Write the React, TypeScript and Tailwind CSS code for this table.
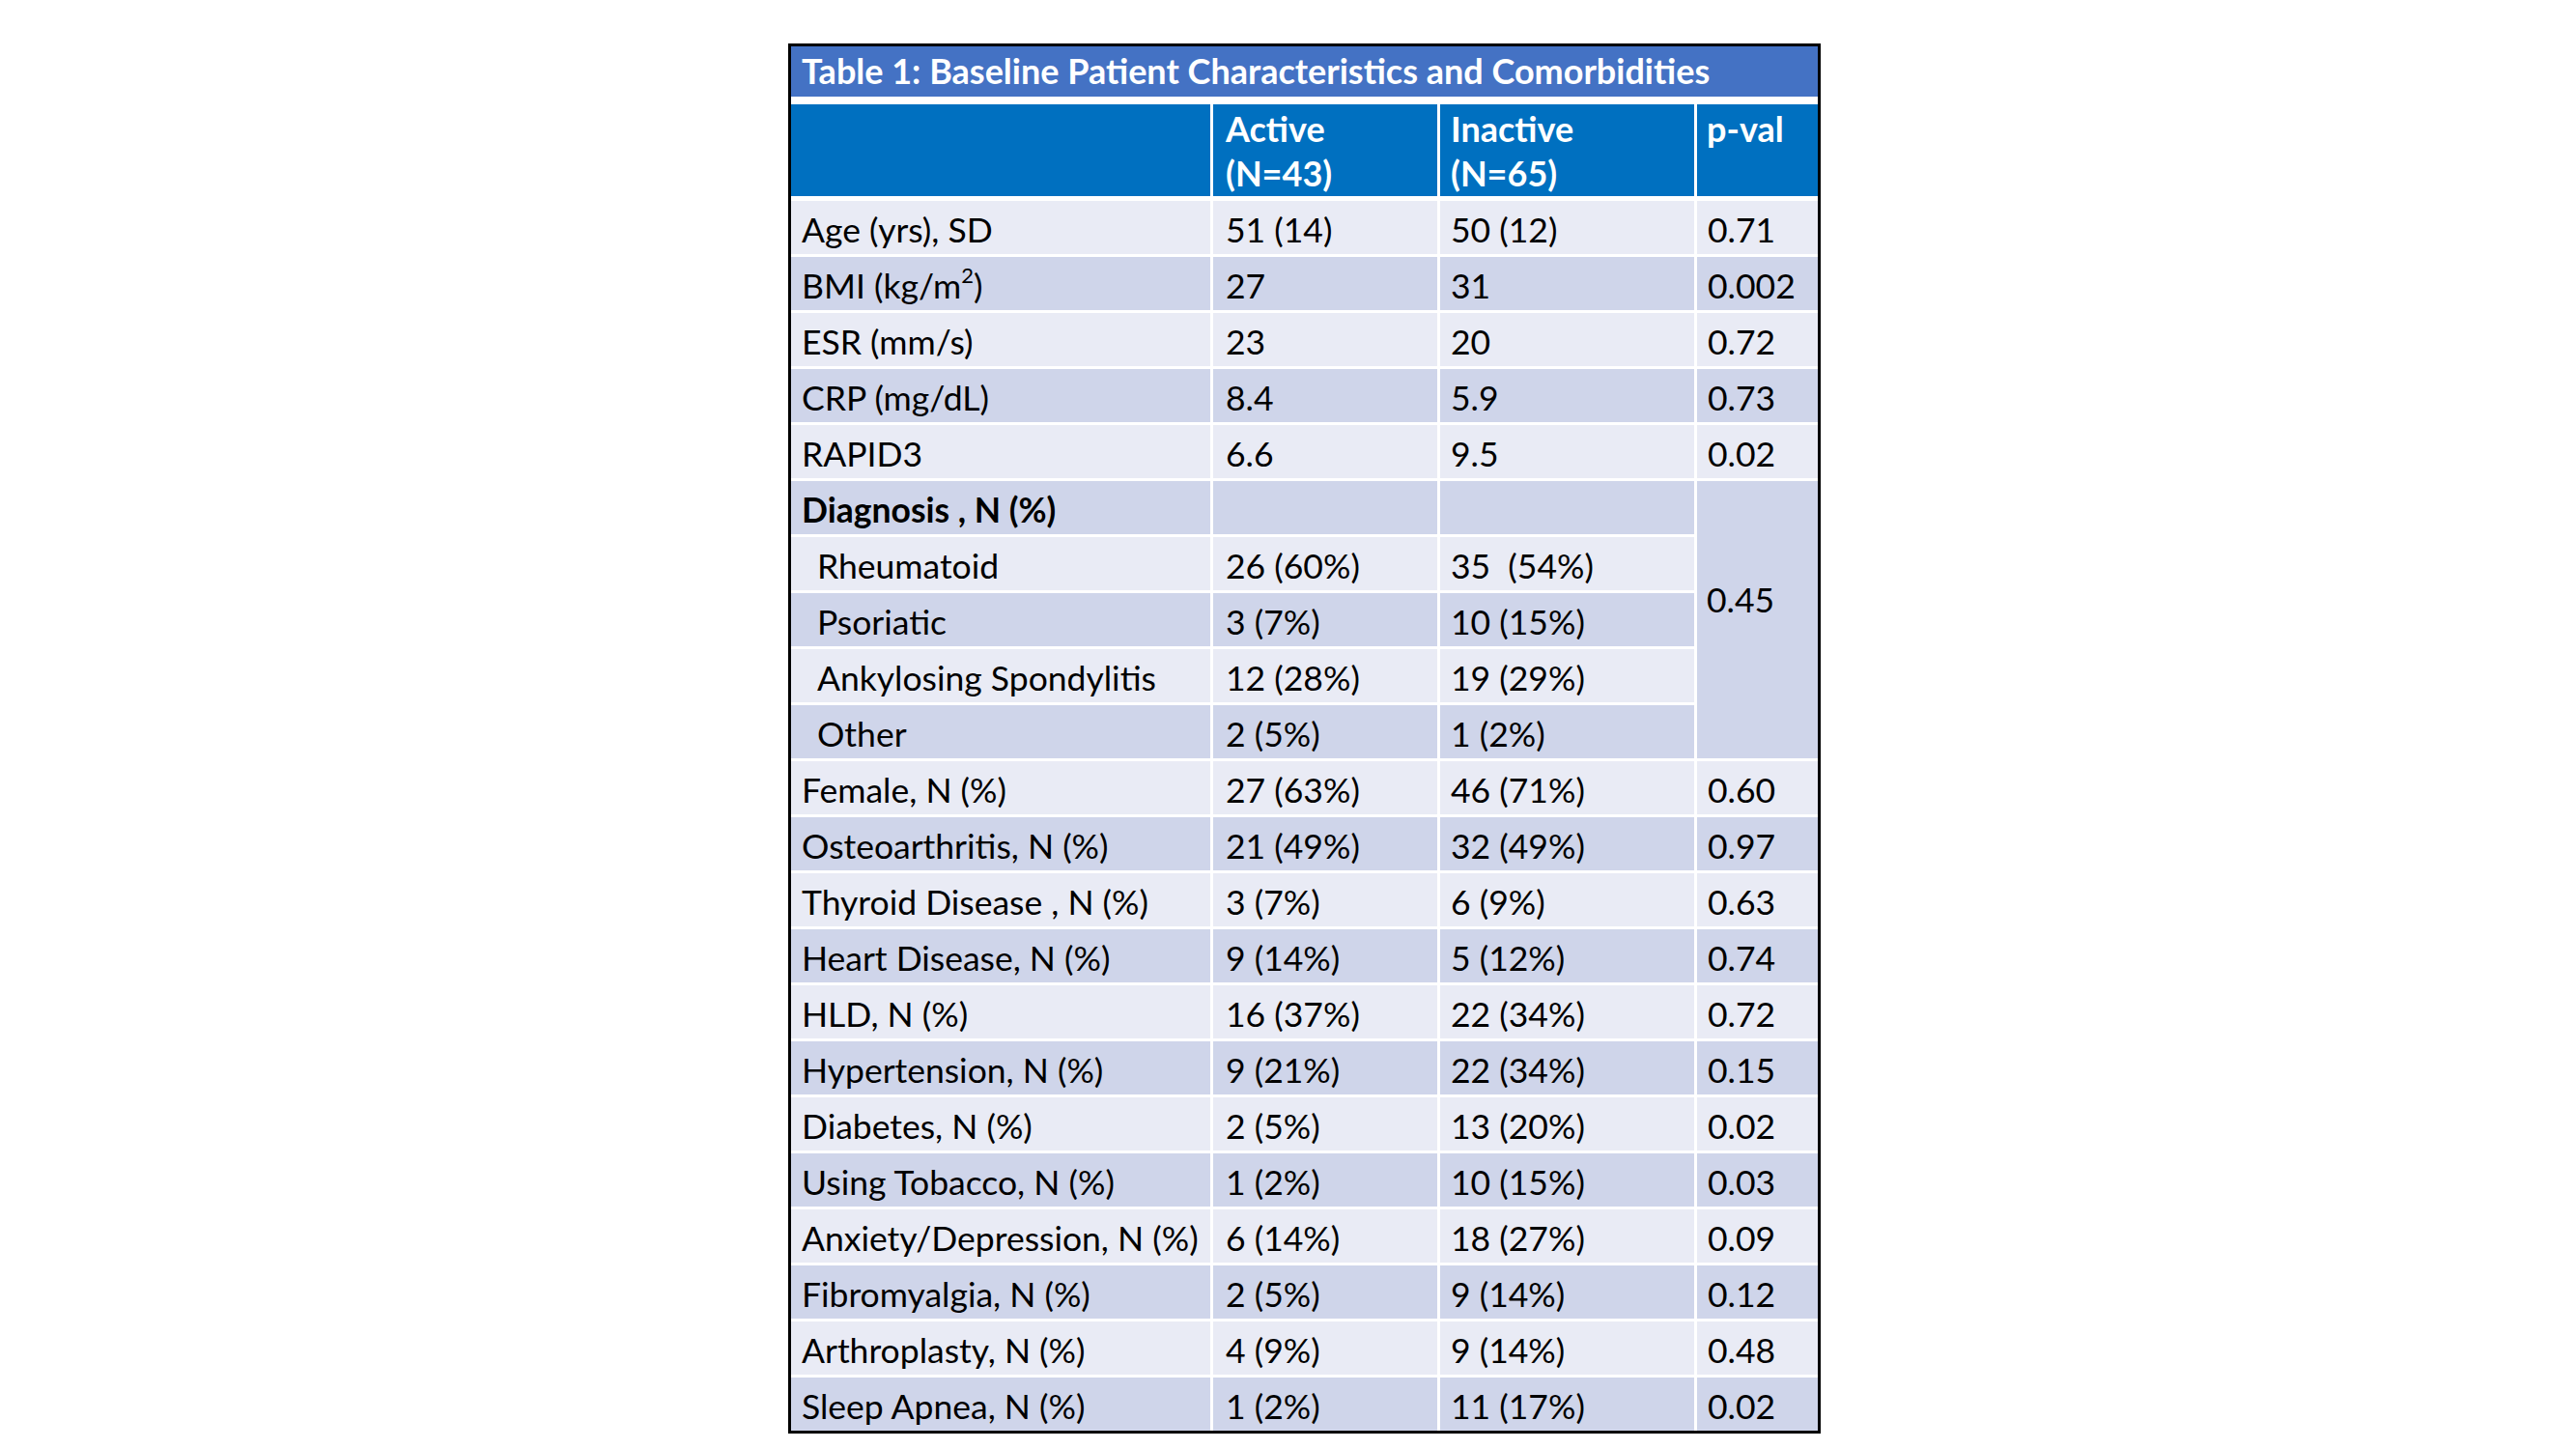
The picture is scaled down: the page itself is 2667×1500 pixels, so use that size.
import type { ReactNode } from "react"

type Row = {
  label: ReactNode
  active: string
  inactive: string
  p?: string
  sub?: boolean
  bold?: boolean
}

const rows: Row[] = [
  { label: "Age (yrs), SD", active: "51 (14)", inactive: "50 (12)", p: "0.71" },
  { label: <>BMI (kg/m<sup className="text-[0.62em]">2</sup>)</>, active: "27", inactive: "31", p: "0.002" },
  { label: "ESR (mm/s)", active: "23", inactive: "20", p: "0.72" },
  { label: "CRP (mg/dL)", active: "8.4", inactive: "5.9", p: "0.73" },
  { label: "RAPID3", active: "6.6", inactive: "9.5", p: "0.02" },
  { label: "Diagnosis , N (%)", active: "", inactive: "", bold: true },
  { label: "Rheumatoid", active: "26 (60%)", inactive: "35  (54%)", sub: true },
  { label: "Psoriatic", active: "3 (7%)", inactive: "10 (15%)", sub: true },
  { label: "Ankylosing Spondylitis", active: "12 (28%)", inactive: "19 (29%)", sub: true },
  { label: "Other", active: "2 (5%)", inactive: "1 (2%)", sub: true },
  { label: "Female, N (%)", active: "27 (63%)", inactive: "46 (71%)", p: "0.60" },
  { label: "Osteoarthritis, N (%)", active: "21 (49%)", inactive: "32 (49%)", p: "0.97" },
  { label: "Thyroid Disease , N (%)", active: "3 (7%)", inactive: "6 (9%)", p: "0.63" },
  { label: "Heart Disease, N (%)", active: "9 (14%)", inactive: "5 (12%)", p: "0.74" },
  { label: "HLD, N (%)", active: "16 (37%)", inactive: "22 (34%)", p: "0.72" },
  { label: "Hypertension, N (%)", active: "9 (21%)", inactive: "22 (34%)", p: "0.15" },
  { label: "Diabetes, N (%)", active: "2 (5%)", inactive: "13 (20%)", p: "0.02" },
  { label: "Using Tobacco, N (%)", active: "1 (2%)", inactive: "10 (15%)", p: "0.03" },
  { label: "Anxiety/Depression, N (%)", active: "6 (14%)", inactive: "18 (27%)", p: "0.09" },
  { label: "Fibromyalgia, N (%)", active: "2 (5%)", inactive: "9 (14%)", p: "0.12" },
  { label: "Arthroplasty, N (%)", active: "4 (9%)", inactive: "9 (14%)", p: "0.48" },
  { label: "Sleep Apnea, N (%)", active: "1 (2%)", inactive: "11 (17%)", p: "0.02" },
]

function Cell({ dark, className = "", children }: { dark: boolean; className?: string; children?: ReactNode }) {
  return (
    <div className={`flex h-[55px] items-center whitespace-pre pl-[11px] pt-[5px] ${dark ? "bg-[#cfd5ea]" : "bg-[#e9ebf5]"} ${className}`}>
      {children}
    </div>
  )
}

export default function App() {
  return (
    <div className="min-h-[1500px] w-full bg-white pl-[816px] pt-[45px] font-['Lato','Liberation_Sans',sans-serif] text-[35.5px] leading-[1.2] text-black">
      <div className="w-[1069px] border-[3px] border-black bg-white">
        <div className="flex h-[52px] items-center bg-[#4472c4] pl-[11px] text-[36px] font-bold text-white">
          Table 1: Baseline Patient Characteristics and Comorbidities
        </div>

        <div className="mb-[5px] mt-[8px] grid grid-cols-[434px_232px_263px_125px] gap-x-[3px] text-[36px] font-bold text-white">
          <div className="h-[95px] bg-[#0070c0]" />
          <div className="h-[95px] bg-[#0070c0] pl-[13px] pt-[2px] leading-[46px]">Active<br />(N=43)</div>
          <div className="h-[95px] bg-[#0070c0] pl-[11px] pt-[2px] leading-[46px]">Inactive<br />(N=65)</div>
          <div className="h-[95px] bg-[#0070c0] pl-[10px] pt-[2px] leading-[46px]">p-val</div>
        </div>

        <div className="grid grid-cols-[434px_232px_263px_125px] gap-[3px]">
          {rows.map((row, i) => {
            const dark = i % 2 === 1
            return [
              <Cell key={`l${i}`} dark={dark} className={`${row.sub ? "pl-[27px]" : ""} ${row.bold ? "font-bold" : ""}`}>{row.label}</Cell>,
              <Cell key={`a${i}`} dark={dark} className="pl-[13px]">{row.active}</Cell>,
              <Cell key={`b${i}`} dark={dark}>{row.inactive}</Cell>,
              row.p !== undefined ? (
                <Cell key={`p${i}`} dark={dark} className="pl-[10px]">{row.p}</Cell>
              ) : row.bold ? (
                <div key={`p${i}`} className="row-span-5 flex items-center bg-[#cfd5ea] pb-[40px] pl-[10px]">0.45</div>
              ) : null,
            ]
          })}
        </div>
      </div>
    </div>
  )
}
